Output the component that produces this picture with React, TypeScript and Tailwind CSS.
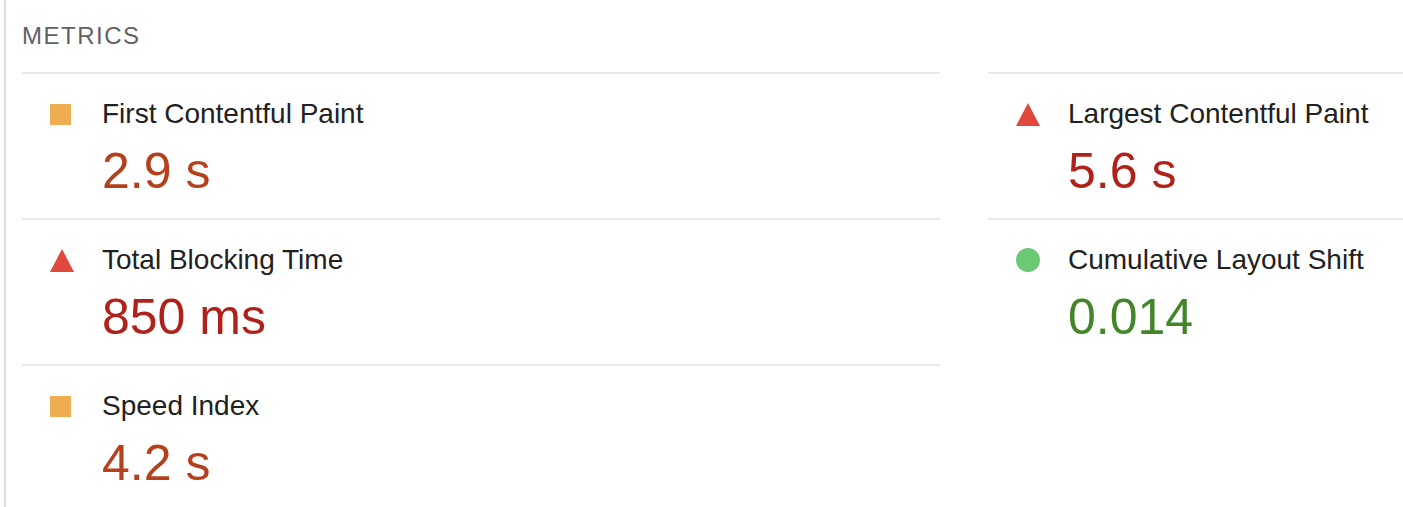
import React from "react";

type Kind = "average" | "fail" | "pass";

const metrics: { title: string; value: string; kind: Kind }[] = [
  { title: "First Contentful Paint", value: "2.9 s", kind: "average" },
  { title: "Largest Contentful Paint", value: "5.6 s", kind: "fail" },
  { title: "Total Blocking Time", value: "850 ms", kind: "fail" },
  { title: "Cumulative Layout Shift", value: "0.014", kind: "pass" },
  { title: "Speed Index", value: "4.2 s", kind: "average" },
];

function Icon({ kind }: { kind: Kind }) {
  if (kind === "average") {
    return <div className="w-[21px] h-[21px] bg-[#EEAD50]" />;
  }
  if (kind === "fail") {
    return (
      <svg width="24" height="23" viewBox="0 0 24 23" className="block">
        <polygon points="12,0 24,23 0,23" fill="#E0483E" />
      </svg>
    );
  }
  return <div className="w-[24px] h-[24px] rounded-full bg-[#6BC873]" />;
}

const valueColor: Record<Kind, string> = {
  average: "text-[#B5401C]",
  fail: "text-[#B0211A]",
  pass: "text-[#43862A]",
};

export default function App() {
  return (
    <div
      className="w-[1403px] h-[507px] overflow-hidden bg-white"
      style={{ fontFamily: '"Liberation Sans", Arial, sans-serif' }}
    >
      <div className="ml-[4px] h-full border-l-2 border-[#dedede] pl-[16px] w-[1910px]">
        <div className="h-[72px] pt-[22px] text-[24px] leading-[28px] tracking-[1.5px] text-[#616161]">
          METRICS
        </div>
        <div className="grid grid-cols-[918px_918px] gap-x-[48px]">
          {metrics.map((m) => (
            <div key={m.title} className="border-t-2 border-[#e8e8e8] h-[146px] pt-[20px]">
              <div className="flex items-center h-[40px]">
                <div className="w-[80px] pl-[28px] flex items-center">
                  <Icon kind={m.kind} />
                </div>
                <div className="text-[28px] text-[#212121] leading-[40px]">{m.title}</div>
              </div>
              <div className={`mt-[9px] pl-[80px] text-[50px] leading-[56px] ${valueColor[m.kind]}`}>
                {m.value}
              </div>
            </div>
          ))}
        </div>
      </div>
    </div>
  );
}
